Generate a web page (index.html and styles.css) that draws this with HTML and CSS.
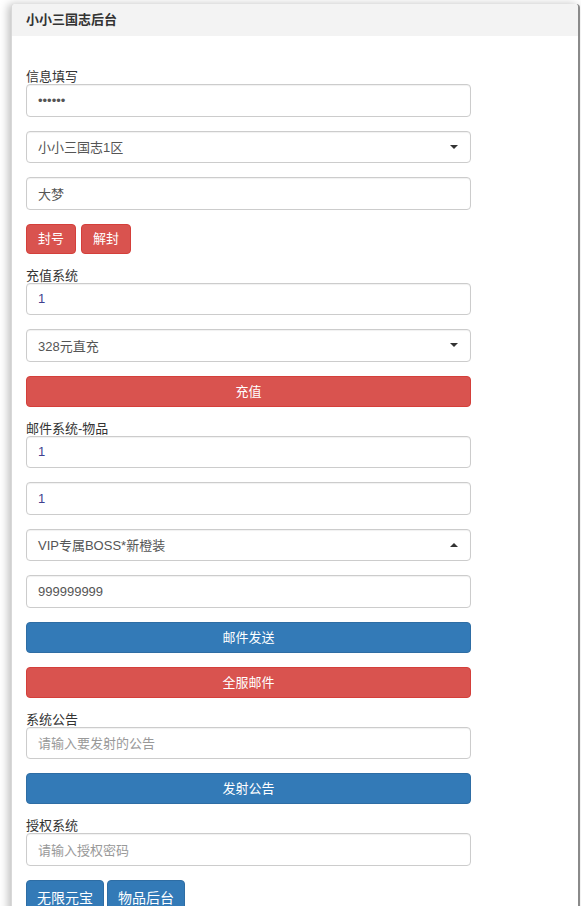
FILE: index.html
```html
<!DOCTYPE html>
<html lang="zh">
<head>
<meta charset="utf-8">
<title>小小三国志后台</title>
<link rel="stylesheet" href="styles.css">
</head>
<body>
<div class="page">
  <div class="panel">
    <div class="panel-heading">小小三国志后台</div>
    <div class="panel-body">
      <form class="form">
        <label class="label">信息填写</label>
        <div class="group"><div class="control">••••••</div></div>
        <div class="group"><div class="control select"><span>小小三国志1区</span><span class="caret"></span></div></div>
        <div class="group"><div class="control">大梦</div></div>
        <div class="group btn-row">
          <button type="button" class="btn btn-red btn-sm">封号</button>
          <button type="button" class="btn btn-red btn-sm">解封</button>
        </div>

        <label class="label">充值系统</label>
        <div class="group"><div class="control num">1</div></div>
        <div class="group"><div class="control select"><span>328元直充</span><span class="caret"></span></div></div>
        <div class="group"><button type="button" class="btn btn-red btn-block">充值</button></div>

        <label class="label">邮件系统-物品</label>
        <div class="group"><div class="control num">1</div></div>
        <div class="group"><div class="control num">1</div></div>
        <div class="group"><div class="control select"><span>VIP专属BOSS*新橙装</span><span class="caret up"></span></div></div>
        <div class="group"><div class="control">999999999</div></div>
        <div class="group"><button type="button" class="btn btn-blue btn-block">邮件发送</button></div>
        <div class="group"><button type="button" class="btn btn-red btn-block">全服邮件</button></div>

        <label class="label">系统公告</label>
        <div class="group"><div class="control placeholder">请输入要发射的公告</div></div>
        <div class="group"><button type="button" class="btn btn-blue btn-block">发射公告</button></div>

        <label class="label">授权系统</label>
        <div class="group"><div class="control placeholder">请输入授权密码</div></div>
        <div class="group btn-row tight">
          <button type="button" class="btn btn-blue btn-lg">无限元宝</button>
          <button type="button" class="btn btn-blue btn-lg">物品后台</button>
        </div>
      </form>
    </div>
  </div>
</div>
</body>
</html>
```
FILE: styles.css
```css
* { box-sizing: border-box; }
html, body {
  margin: 0;
  padding: 0;
  background: #fff;
  font-family: "Liberation Sans", "Noto Sans CJK SC", sans-serif;
  font-size: 13px;
  color: #333;
  overflow: hidden;
}
.page {
  padding: 4px 0 0 11px;
  height: 906px;
}
.panel {
  width: 569px;
  min-height: 1000px;
  background: #fff;
  border-left: 1px solid #d8d8d8;
  border-right: 2px solid #8a8a8a;
  border-radius: 4px 4px 0 0;
  box-shadow: -3px 0 8px rgba(0,0,0,0.25);
}
.panel-heading {
  height: 32px;
  line-height: 32px;
  padding-left: 14px;
  background: #f3f3f3;
  font-weight: bold;
  font-size: 13px;
  color: #333;
  border-radius: 4px 4px 0 0;
}
.panel-body {
  padding: 33px 14px 0;
}
.form {
  width: 445px;
  display: flex;
  flex-direction: column;
}
.label {
  display: block;
  height: 15px;
  line-height: 15px;
  font-size: 13px;
  color: #333;
}
.group {
  margin-bottom: 14px;
  flex-shrink: 0;
}
.control {
  height: 32.5px;
  border: 1px solid #ccc;
  border-radius: 4px;
  padding: 0 11px;
  display: flex;
  align-items: center;
  color: #555;
  font-size: 13px;
  box-shadow: inset 0 1px 1px rgba(0,0,0,0.06);
}
.control.num { color: #3f3f8f; }
.control.placeholder { color: #999; }
.select { justify-content: space-between; }
.caret {
  width: 0;
  height: 0;
  border-left: 4px solid transparent;
  border-right: 4px solid transparent;
  border-top: 4px solid #333;
  margin-right: 1px;
}
.caret.up {
  border-top: 0;
  border-bottom: 4px solid #333;
}
.btn-row {
  display: flex;
  gap: 5px;
}
.btn-row.tight { gap: 3px; }
.btn {
  font-family: inherit;
  font-size: 13px;
  color: #fff;
  height: 31px;
  padding: 0 11px;
  border-radius: 4px;
  border: 1px solid transparent;
  cursor: pointer;
  line-height: 29px;
}
.btn-sm { height: 30px; line-height: 28px; }
.btn-red {
  background: #d9534f;
  border-color: #d43f3a;
}
.btn-blue {
  background: #337ab7;
  border-color: #2e6da4;
}
.btn-block {
  width: 100%;
  display: block;
}
.btn-lg {
  height: 36px;
  font-size: 14px;
  padding: 0 10px;
  line-height: 34px;
}
```
